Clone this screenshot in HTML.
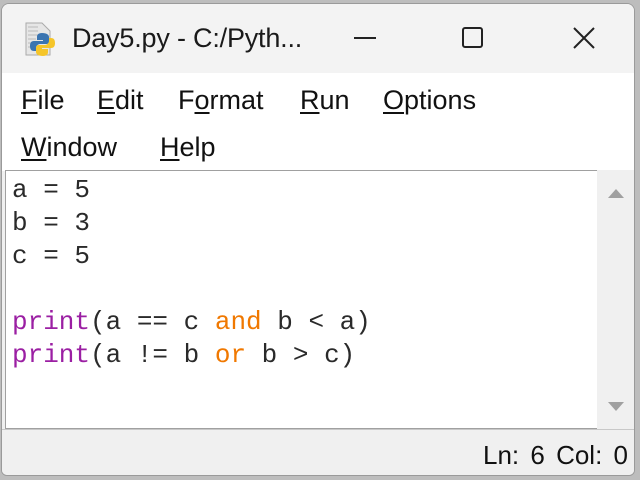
<!DOCTYPE html>
<html><head><style>
body{margin:0;width:640px;height:480px;background:#bdbdbd;position:relative;overflow:hidden;font-family:"Liberation Sans",sans-serif}
.win{position:absolute;left:1px;top:3px;width:634px;height:473px;background:#f0f0f0;border-radius:8px 8px 6px 6px;overflow:hidden;border:1px solid #9a9a9a;box-sizing:border-box}
.title{position:absolute;left:0;top:0;width:100%;height:69px;background:#f3f3f3}
.ttext{position:absolute;left:70px;top:19px;font-size:27px;color:#1a1a1a;letter-spacing:-0.2px}
.menu{position:absolute;left:0;top:69px;width:100%;height:98px;background:#fff}
.m{position:absolute;font-size:27px;color:#111}
.m u{text-decoration:underline;text-underline-offset:3px}
.edit{position:absolute;left:3px;top:166px;width:592px;height:259px;background:#fff;border:1px solid #a0a0a0;border-right:none;box-sizing:border-box}
pre{margin:0;position:absolute;left:6px;top:3px;font-family:"Liberation Mono",monospace;font-size:26px;line-height:33px;color:#2a2a2a}
.k{color:#9b1fa3}.o{color:#f07800}
.sb{position:absolute;left:595px;top:166px;width:38px;height:259px;background:#f0f0f0}
.status{position:absolute;left:0;top:425px;width:100%;height:48px;background:#f0f0f0;border-top:1px solid #c8c8c8}
.st{position:absolute;right:6px;top:10px;font-size:26px;color:#111;word-spacing:4px}
</style></head><body>
<div class="win">
<div class="title">
<svg style="position:absolute;left:20px;top:15px" width="40" height="40" viewBox="0 0 40 40">
<path d="M4 4h16l8 8v24H4z" fill="#e6e6e6" stroke="#aaa"/>
<path d="M6 8h10M6 12h10M6 16h10M6 20h8M6 24h8M6 28h8" stroke="#bbb"/>
<path d="M20 14c-4 0-5 2-5 4v3h6v1h-9c-3 0-4 2-4 5s1 5 4 5h2v-3c0-2 2-4 4-4h6c2 0 3-1 3-3v-4c0-2-2-4-7-4z" fill="#3a74b0"/>
<path d="M21 37c4 0 5-2 5-4v-3h-6v-1h9c3 0 4-2 4-5s-1-5-4-5h-2v3c0 2-2 4-4 4h-6c-2 0-3 1-3 3v4c0 2 2 4 7 4z" fill="#f5c52a"/>
</svg>
<div class="ttext">Day5.py - C:/Pyth...</div>
<div style="position:absolute;left:352px;top:33px;width:22px;height:2px;background:#222"></div>
<div style="position:absolute;left:460px;top:23px;width:21px;height:21px;border:2px solid #222;border-radius:3px;box-sizing:border-box"></div>
<svg style="position:absolute;left:570px;top:22px" width="24" height="24"><path d="M2 2L22 22M22 2L2 22" stroke="#222" stroke-width="2"/></svg>
</div>
<div class="menu">
<div class="m" style="left:19px;top:12px"><u>F</u>ile</div>
<div class="m" style="left:95px;top:12px"><u>E</u>dit</div>
<div class="m" style="left:176px;top:12px">F<u>o</u>rmat</div>
<div class="m" style="left:298px;top:12px"><u>R</u>un</div>
<div class="m" style="left:381px;top:12px"><u>O</u>ptions</div>
<div class="m" style="left:19px;top:59px"><u>W</u>indow</div>
<div class="m" style="left:158px;top:59px"><u>H</u>elp</div>
</div>
<div class="edit"><pre>a = 5
b = 3
c = 5

<span class="k">print</span>(a == c <span class="o">and</span> b &lt; a)
<span class="k">print</span>(a != b <span class="o">or</span> b &gt; c)</pre></div>
<div class="sb">
<svg style="position:absolute;left:10px;top:16px" width="18" height="14"><path d="M1 12L9 3L17 12z" fill="#a0a0a0"/></svg>
<svg style="position:absolute;left:10px;top:230px" width="18" height="14"><path d="M1 2L9 11L17 2z" fill="#a0a0a0"/></svg>
</div>
<div class="status"><div class="st">Ln: 6 Col: 0</div></div>
</div>
</body></html>
